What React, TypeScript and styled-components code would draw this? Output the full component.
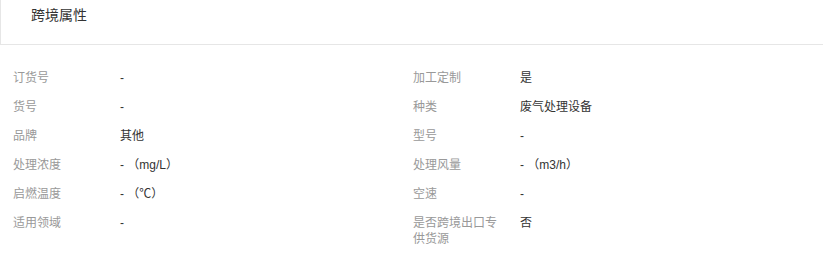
import React from 'react';
import styled, { createGlobalStyle } from 'styled-components';

const GlobalStyle = createGlobalStyle`
  body {
    margin: 0;
    background: #fff;
    font-family: "Liberation Sans", "Noto Sans CJK SC", sans-serif;
  }
`;

const Panel = styled.section`
  width: 823px;
  border-bottom: 1px solid #e6e6e6;
`;

const Header = styled.div`
  height: 45px;
  box-sizing: border-box;
  border-left: 1px solid #e6e6e6;
  border-bottom: 1px solid #e6e6e6;
  padding: 5px 0 0 30px;
  font-size: 14px;
  line-height: 20px;
  color: #333;
`;

const Grid = styled.div`
  display: grid;
  grid-template-columns: 400px 400px;
  row-gap: 13px;
  padding: 25px 0 17px 13px;
`;

const Row = styled.div`
  display: flex;
  font-size: 12px;
  line-height: 16px;
`;

const Label = styled.div`
  width: 90px;
  margin-right: 17px;
  flex-shrink: 0;
  color: #999;
`;

const Value = styled.div`
  color: #333;
`;

const items: [string, string][] = [
  ['订货号', '-'],
  ['加工定制', '是'],
  ['货号', '-'],
  ['种类', '废气处理设备'],
  ['品牌', '其他'],
  ['型号', '-'],
  ['处理浓度', '- （mg/L）'],
  ['处理风量', '- （m3/h）'],
  ['启燃温度', '- （℃）'],
  ['空速', '-'],
  ['适用领域', '-'],
  ['是否跨境出口专供货源', '否'],
];

export default function App() {
  return <>
    <GlobalStyle />
    <Panel>
      <Header>跨境属性</Header>
      <Grid>
        {items.map(([label, value]) => (
          <Row key={label}>
            <Label>{label}</Label>
            <Value>{value}</Value>
          </Row>
        ))}
      </Grid>
    </Panel>
  </>;
}
